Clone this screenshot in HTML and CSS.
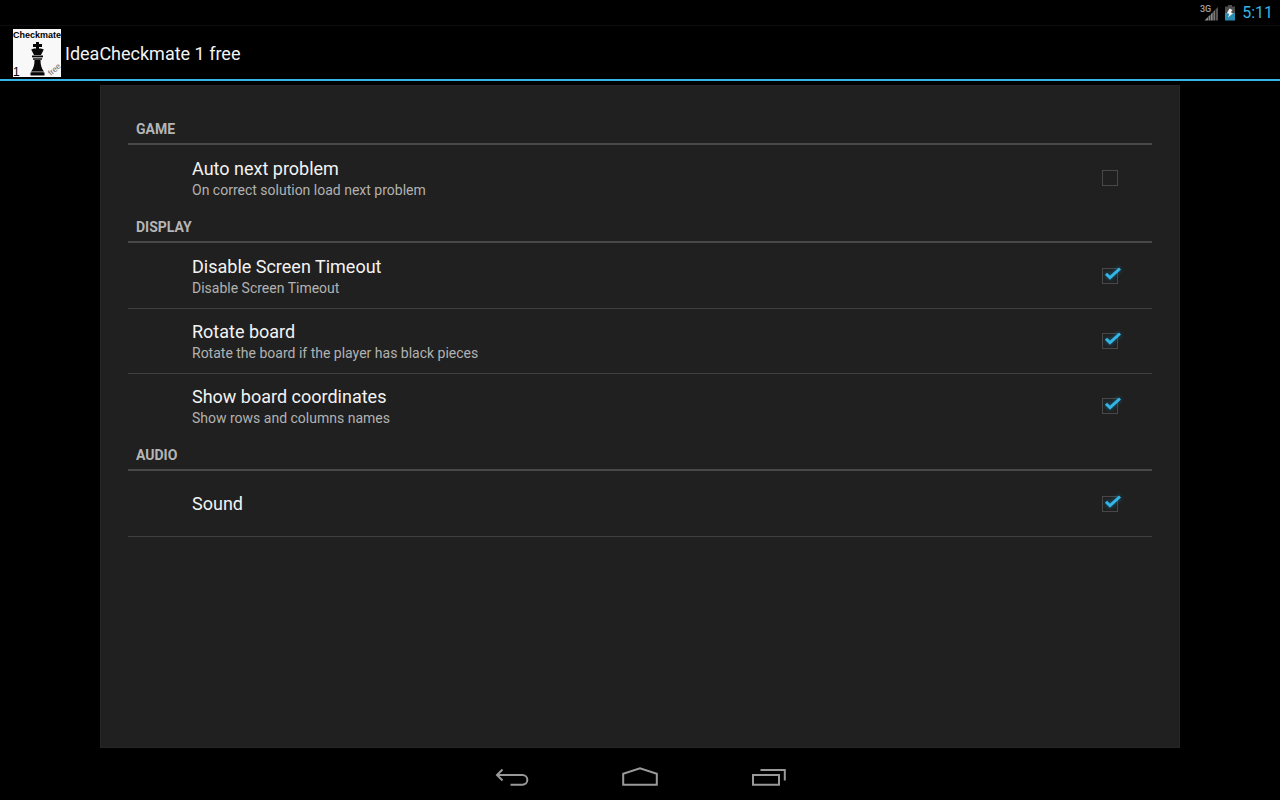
FILE: index.html
```html
<!DOCTYPE html>
<html lang="en">
<head>
<meta charset="utf-8">
<title>IdeaCheckmate 1 free</title>
<link rel="stylesheet" href="styles.css">
</head>
<body>
<svg class="defs" width="0" height="0" aria-hidden="true">
  <symbol id="tick" viewBox="0 0 24 24">
    <path d="M5 11.700l4 4L19 6.500" fill="none" stroke="#33b5e5" stroke-width="3"/>
  </symbol>
</svg>
<div class="status">
  <svg class="signal" width="18" height="18" viewBox="0 0 18 18" aria-label="3G signal">
    <g fill="#8c8c8c">
      <path d="M4.500 16.500L8 13V16.500z"/>
      <path d="M8.500 12.500L10.500 10.500V16.500H8.500z"/>
      <path d="M11 10L12.700 8.300V16.500H11z"/>
      <path d="M13.300 7.700L15 6V16.500H13.300z" fill="#777"/>
      <path d="M15.500 5.500L18 3V16.500H15.500z" fill="#555"/>
    </g>
    <text class="signal-text" x="0" y="8">3G</text>
  </svg>
  <svg class="battery" width="10" height="16" viewBox="0 0 10 16" aria-label="Battery charging">
    <path d="M0 1.500H3V0H7V1.500H10V8H0z" fill="#4d4d4d"/>
    <path d="M0 8H10V15.500H0z" fill="#2b8cb2"/>
    <path d="M4.500 3.500L7.500 5L5.800 7.200L8 8.200L3 12.500L4.200 9L2 8z" fill="#f2f2f2"/>
  </svg>
  <time class="clock">5:11</time>
</div>
<header class="bar">
  <svg class="logo" width="48" height="48" viewBox="0 0 48 48" aria-label="IdeaCheckmate">
    <rect width="48" height="48" fill="#f8f8f8"/>
    <text class="logo-name" x="24" y="9" text-anchor="middle">Checkmate</text>
    <text class="logo-number" x="0" y="47">1</text>
    <text class="logo-free" x="38" y="47" transform="rotate(-42 38 47)">free</text>
    <g fill="#080808">
      <path d="M23 13h3v2h3v3h-3v1.500c2 0 4 .5 4.800 1L28 26h-7l-2.800-5.500c.8-.5 2.800-1 4.800-1V18h-3v-3h3z"/>
      <path d="M19 26.500h11v1.500H19zM20 29.300h9v1.500h-9z"/>
      <path d="M21.500 31h6c0 5 1 8 3 11h-12c2-3 3-6 3-11z"/>
      <path d="M18.500 42h12v1.500H31.500v3h-14v-3h1z"/>
    </g>
    <path d="M19 28.600h11M18.500 42.800h12" stroke="#999" fill="none"/>
  </svg>
  <h1 class="title">IdeaCheckmate 1 free</h1>
</header>
<main class="panel">
  <section>
    <h2 class="category">GAME</h2>
    <label class="row">
      <span class="words"><span class="name">Auto next problem</span><span class="summary">On correct solution load next problem</span></span>
      <span class="check"><input type="checkbox"><svg class="tick"><use href="#tick"/></svg></span>
    </label>
  </section>
  <section>
    <h2 class="category">DISPLAY</h2>
    <label class="row">
      <span class="words"><span class="name">Disable Screen Timeout</span><span class="summary">Disable Screen Timeout</span></span>
      <span class="check"><input type="checkbox" checked><svg class="tick"><use href="#tick"/></svg></span>
    </label>
    <label class="row">
      <span class="words"><span class="name">Rotate board</span><span class="summary">Rotate the board if the player has black pieces</span></span>
      <span class="check"><input type="checkbox" checked><svg class="tick"><use href="#tick"/></svg></span>
    </label>
    <label class="row">
      <span class="words"><span class="name">Show board coordinates</span><span class="summary">Show rows and columns names</span></span>
      <span class="check"><input type="checkbox" checked><svg class="tick"><use href="#tick"/></svg></span>
    </label>
  </section>
  <section class="last">
    <h2 class="category">AUDIO</h2>
    <label class="row">
      <span class="words"><span class="name">Sound</span></span>
      <span class="check"><input type="checkbox" checked><svg class="tick"><use href="#tick"/></svg></span>
    </label>
  </section>
</main>
<nav class="nav">
  <button type="button" aria-label="Back">
    <svg width="40" height="24" viewBox="0 0 40 24"><path d="M10.500 4.500L5 10l5.500 5.500M5.500 10H30.500a4.700 4.700 0 0 1 0 9.700H18.500"/></svg>
  </button>
  <button type="button" aria-label="Home">
    <svg width="40" height="24" viewBox="0 0 40 24"><path d="M3.200 19.800V8.800L20 3.200L36.800 8.800V19.800z"/></svg>
  </button>
  <button type="button" aria-label="Recent apps">
    <svg width="40" height="24" viewBox="0 0 40 24"><path d="M5 10H31V19.800H5zM12.500 5H36.800V15.500"/></svg>
  </button>
</nav>
</body>
</html>
```
FILE: styles.css
```css
* {
  box-sizing: border-box;
}

body {
  margin: 0;
  min-height: 100vh;
  display: flex;
  flex-direction: column;
  background: #000;
  color: #f3f3f3;
  font-family: Roboto, "Noto Sans", sans-serif;
}

.defs {
  position: absolute;
}

.status {
  display: flex;
  justify-content: flex-end;
  align-items: center;
  height: 26px;
  padding-right: 7px;
  border-bottom: 1px solid #0c0c0c;
}

.signal-text {
  font-size: 9px;
  font-weight: 500;
  fill: #a0a0a0;
}

.battery {
  margin: 0 7px 0 7px;
}

.clock {
  color: #33b5e5;
  font-size: 16px;
  line-height: 24px;
}

.bar {
  display: flex;
  align-items: center;
  gap: 4px;
  height: 55px;
  padding-left: 13px;
  border-bottom: 2px solid #33b5e5;
}

.logo {
  overflow: visible;
}

.logo-name {
  font: 700 9px "Liberation Sans", sans-serif;
}

.logo-number {
  font: 12px "Liberation Sans", sans-serif;
}

.logo-free {
  font: 8px "Liberation Sans", sans-serif;
  fill: #666;
}

.title {
  margin: 0;
  padding-top: 2px;
  font-size: 18px;
  font-weight: 400;
  line-height: 24px;
}

.panel {
  flex: 1;
  margin: 4px 100px;
  padding: 26px 27px;
  background: #202020;
  border: 1px solid #262626;
}

.category {
  display: flex;
  align-items: center;
  height: 33px;
  margin: 0;
  padding: 2px 8px 0;
  border-bottom: 2px solid #484848;
  color: #b5b5b5;
  font-size: 14px;
  font-weight: 700;
}

.row {
  display: flex;
  align-items: center;
  justify-content: space-between;
  height: 65px;
  padding: 0 30px 0 64px;
}

.row + .row {
  border-top: 1px solid #404040;
}

.last {
  border-bottom: 1px solid #404040;
}

.words {
  display: flex;
  flex-direction: column;
}

.name {
  font-size: 18px;
  line-height: 24px;
}

.summary {
  color: #b2b2b2;
  font-size: 14px;
  line-height: 18px;
}

.check {
  position: relative;
  display: flex;
  padding-right: 4px;
}

.check input {
  appearance: none;
  width: 16px;
  height: 16px;
  margin: 0;
  border: 1px solid #484848;
}

.tick {
  position: absolute;
  left: -1px;
  top: -6px;
  width: 24px;
  height: 24px;
  visibility: hidden;
  pointer-events: none;
  filter: drop-shadow(0 0 2px #176684);
}

.check input:checked + .tick {
  visibility: visible;
}

.nav {
  display: flex;
  justify-content: center;
  height: 48px;
}

.nav button {
  display: flex;
  align-items: center;
  justify-content: center;
  width: 128px;
  padding: 2px 0 0;
  border: 0;
  background: none;
}

.nav svg {
  fill: none;
  stroke: #999;
  stroke-width: 2;
}
```
